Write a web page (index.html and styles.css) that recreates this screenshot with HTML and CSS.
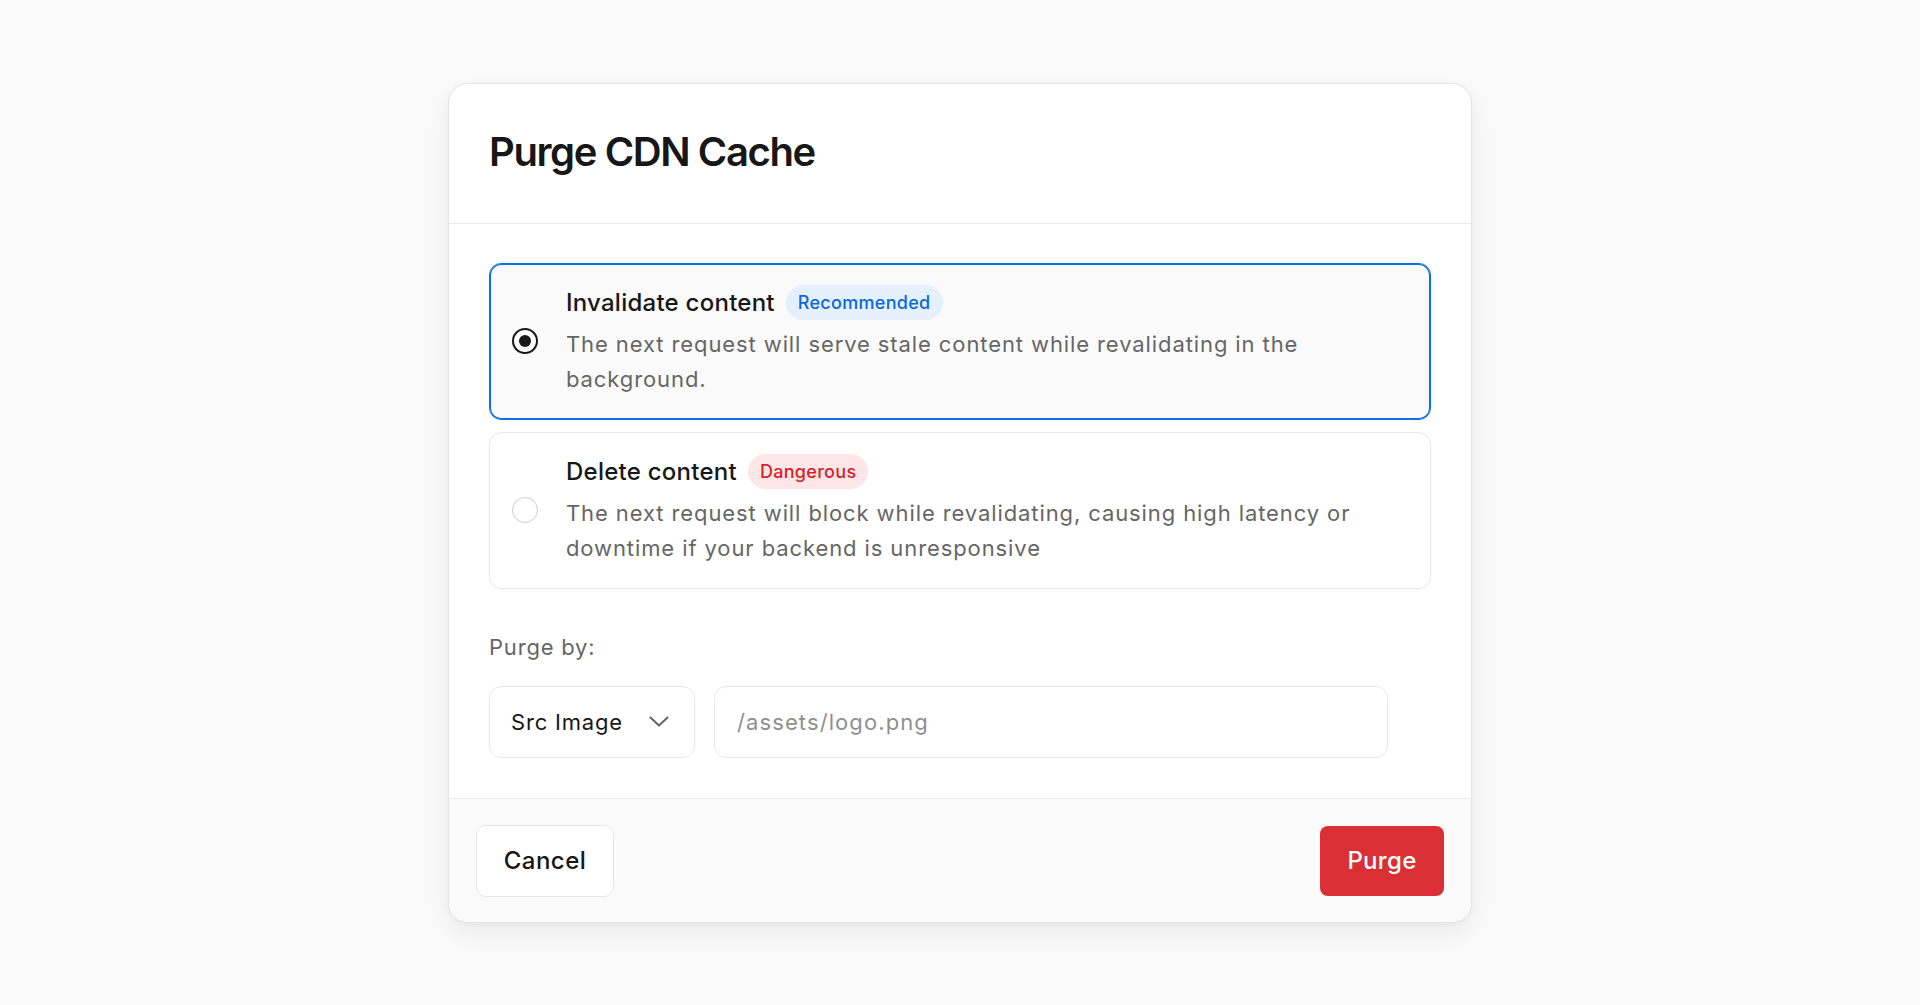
FILE: index.html
```html
<!DOCTYPE html>
<html lang="en">
<head>
<meta charset="utf-8">
<title>Purge CDN Cache</title>
<link rel="stylesheet" href="styles.css">
</head>
<body>
<div class="modal">
  <div class="modal-header">
    <h1 class="modal-title">Purge CDN Cache</h1>
  </div>
  <div class="modal-body">
    <div class="options">
      <div class="option selected">
        <span class="radio checked"><span class="radio-dot"></span></span>
        <div class="option-text">
          <div class="option-head">
            <span class="option-title">Invalidate content</span>
            <span class="badge badge-blue">Recommended</span>
          </div>
          <p class="option-desc">The next request will serve stale content while revalidating in the background.</p>
        </div>
      </div>
      <div class="option">
        <span class="radio"></span>
        <div class="option-text">
          <div class="option-head">
            <span class="option-title">Delete content</span>
            <span class="badge badge-red">Dangerous</span>
          </div>
          <p class="option-desc">The next request will block while revalidating, causing high latency or downtime if your backend is unresponsive</p>
        </div>
      </div>
    </div>
    <div class="field-label">Purge by:</div>
    <div class="fields">
      <div class="select">
        <span>Src Image</span>
        <svg class="chevron" width="20" height="11" viewBox="0 0 20 11" fill="none"><polyline points="1.5,1.5 10,9.5 18.5,1.5" stroke="#666" stroke-width="2" stroke-linecap="round" stroke-linejoin="round"/></svg>
      </div>
      <div class="input">/assets/logo.png</div>
    </div>
  </div>
  <div class="modal-footer">
    <button class="btn btn-secondary">Cancel</button>
    <button class="btn btn-danger">Purge</button>
  </div>
</div>
</body>
</html>
```
FILE: styles.css
```css
html, body {
  margin: 0;
  padding: 0;
}
body {
  background: #fafafa;
  font-family: Inter, "Noto Sans", "Liberation Sans", sans-serif;
  min-height: 100vh;
  display: flex;
  align-items: center;
  justify-content: center;
  color: #171717;
}
.modal {
  width: 1024px;
  box-sizing: border-box;
  background: #fff;
  border: 1px solid #e4e4e4;
  border-radius: 20px;
  box-shadow: 0 12px 32px rgba(0, 0, 0, 0.06), 0 2px 6px rgba(0, 0, 0, 0.04);
  overflow: hidden;
}
.modal-header {
  padding: 44px 40px 47px;
  border-bottom: 1px solid #ebebeb;
}
.modal-title {
  margin: 0;
  font-size: 40px;
  line-height: 48px;
  font-weight: 600;
  letter-spacing: -1.4px;
  color: #171717;
}
.modal-body {
  padding: 39px 40px 40px;
}
.options {
  display: flex;
  flex-direction: column;
  gap: 12px;
}
.option {
  display: flex;
  align-items: center;
  gap: 28px;
  padding: 21px 22px;
  border: 1px solid #e8e8e8;
  border-radius: 12px;
  background: #fff;
}
.option.selected {
  background: #fafafa;
  border-color: #0b6fe8;
  box-shadow: inset 0 0 0 1px #0b6fe8;
}
.radio {
  flex: none;
  width: 26px;
  height: 26px;
  box-sizing: border-box;
  border-radius: 50%;
  border: 1.5px solid #cdcdcd;
  background: #fff;
  display: flex;
  align-items: center;
  justify-content: center;
}
.radio.checked {
  border: 2px solid #171717;
}
.radio-dot {
  width: 12px;
  height: 12px;
  border-radius: 50%;
  background: #171717;
}
.option-text {
  flex: 1;
  min-width: 0;
}
.option-head {
  display: flex;
  align-items: center;
  gap: 11px;
  height: 35px;
}
.option-title {
  font-size: 24px;
  font-weight: 500;
  letter-spacing: 0.25px;
  color: #171717;
}
.badge {
  font-size: 18px;
  font-weight: 500;
  letter-spacing: 0.3px;
  height: 35px;
  line-height: 35px;
  padding: 0 12px;
  border-radius: 18px;
}
.badge-blue {
  background: #e5f0fd;
  color: #0a68d8;
}
.badge-red {
  background: #ffe6e6;
  color: #d3222b;
}
.option-desc {
  margin: 7px 0 0;
  font-size: 22px;
  line-height: 35.5px;
  letter-spacing: 0.9px;
  color: #666;
}
.field-label {
  margin-top: 41px;
  font-size: 22px;
  line-height: 35px;
  letter-spacing: 0.8px;
  color: #666;
}
.fields {
  display: flex;
  gap: 19px;
  margin-top: 21px;
}
.select, .input {
  height: 72px;
  box-sizing: border-box;
  border: 1px solid #e8e8e8;
  border-radius: 12px;
  background: #fff;
  font-size: 22px;
  display: flex;
  align-items: center;
}
.select {
  width: 206px;
  justify-content: space-between;
  padding: 0 25px 0 21px;
  letter-spacing: 0.8px;
  color: #171717;
}
.input {
  width: 674px;
  padding: 0 22px;
  letter-spacing: 1.1px;
  color: #8f8f8f;
}
.modal-footer {
  display: flex;
  justify-content: space-between;
  align-items: center;
  padding: 26px 27px 25px;
  background: #fafafa;
  border-top: 1px solid #ebebeb;
}
.btn {
  font-family: inherit;
  font-size: 24px;
  font-weight: 500;
  border-radius: 10px;
  cursor: pointer;
}
.btn-secondary {
  height: 72px;
  width: 138px;
  background: #fff;
  color: #171717;
  letter-spacing: 0.5px;
  border: 1px solid #e6e6e6;
}
.btn-danger {
  height: 70px;
  width: 124px;
  background: #da2f35;
  color: #fff;
  letter-spacing: 0.3px;
  border: none;
  border-radius: 8px;
}
```
